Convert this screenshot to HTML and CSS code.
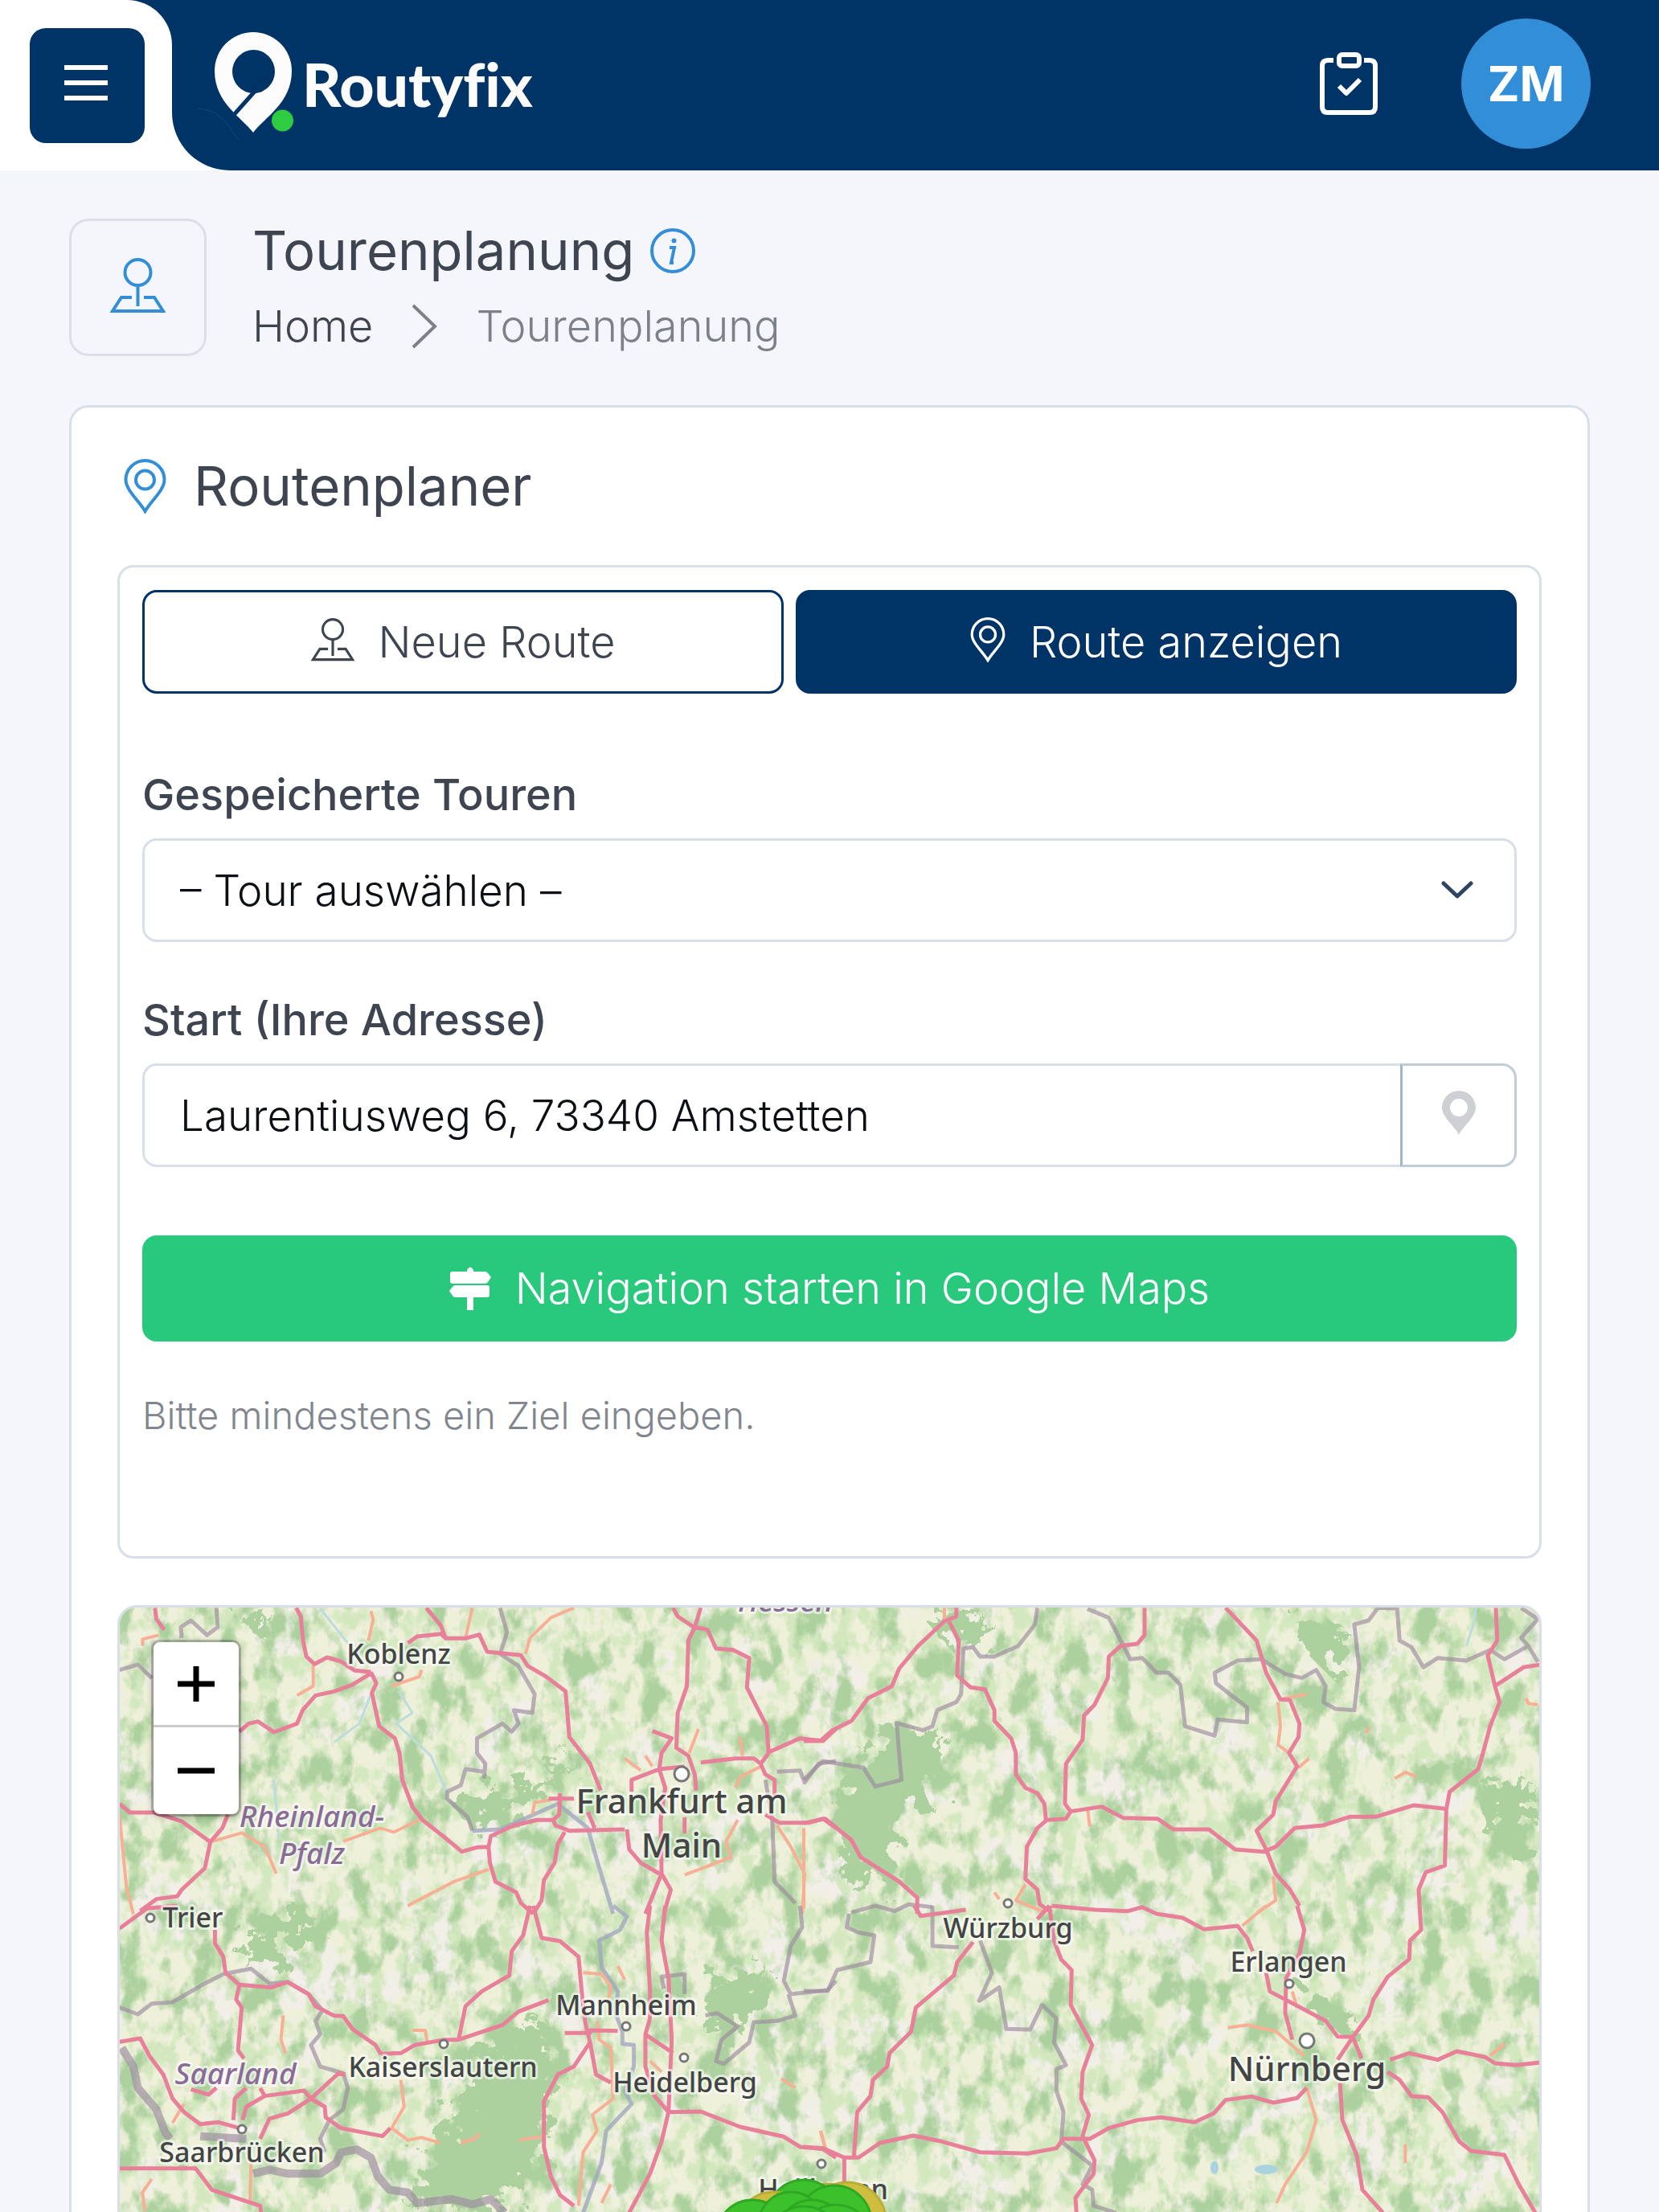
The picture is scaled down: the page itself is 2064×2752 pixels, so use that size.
FILE: index.html
```html
<!DOCTYPE html>
<html lang="de">
<head>
<meta charset="utf-8">
<meta name="viewport" content="width=device-width, initial-scale=1">
<title>Tourenplanung – Routyfix</title>
<link rel="stylesheet" href="styles.css">
</head>
<body>
<svg class="defs" width="0" height="0" aria-hidden="true">
  <symbol id="i-station" viewBox="0 0 69 69"><g fill="none" stroke="currentColor" stroke-width="4"><circle cx="34.5" cy="18" r="16"/><path d="M34.500 34V60M27 49H14L3 66H66L55 49H42"/></g></symbol>
  <symbol id="i-pin" viewBox="0 0 53 68"><g fill="none" stroke="currentColor" stroke-width="4"><path d="M26.500 65C20 53 2.500 39 2.500 26A24 24 0 0 1 50.500 26C50.500 39 33 53 26.500 65Z"/><circle cx="26.500" cy="26" r="11.500"/></g></symbol>
</svg>

<header class="topbar">
  <div class="menu-zone">
    <div class="menu-inner">
      <button class="menu-btn" type="button" aria-label="Menü">
        <svg viewBox="0 0 54 44"><path d="M0 3H54M0 22H54M0 41H54" stroke="currentColor" stroke-width="6"/></svg>
      </button>
    </div>
  </div>
  <div class="bar">
    <a class="logo" href="#">
      <svg class="logo-mark" viewBox="246 36 130 144">
        <path d="M246 139Q270 140 284 160T298 178" fill="none" stroke="#17477a" stroke-width="1"/>
        <path d="M315 169C300 149 267 132 267 92A48 48 0 0 1 363 92C363 132 330 149 315 169Z" fill="#fcfcfd"/>
        <ellipse cx="315.500" cy="93" rx="26.500" ry="27" fill="#036"/>
        <path d="M336 104L326 118L316 120L310 112Z" fill="#036"/>
        <path d="M289 149L322 112" stroke="#036" stroke-width="5"/>
        <circle cx="351.500" cy="154" r="13.500" fill="#2ecc40"/>
      </svg>
      <span class="logo-text">Routyfix</span>
    </a>
    <div class="bar-tools">
      <button class="tool-btn" type="button" aria-label="Aufgaben">
        <svg viewBox="0 0 72 78"><g fill="none" stroke="currentColor" stroke-width="6" stroke-linejoin="round"><path d="M17 10H10Q3 10 3 17V68Q3 75 10 75H62Q69 75 69 68V17Q69 10 62 10H55"/><rect x="24" y="3" width="25" height="14" rx="4"/><path d="M24 42L33 51L50 34"/></g></svg>
      </button>
      <button class="avatar" type="button">ZM</button>
    </div>
  </div>
</header>

<main class="page">
  <div class="page-head">
    <div class="page-icon"><svg><use href="#i-station"/></svg></div>
    <div class="page-titles">
      <h1>Tourenplanung
        <svg class="info" viewBox="0 0 56 56"><circle cx="28" cy="28" r="26" fill="none" stroke="currentColor" stroke-width="4"/><circle cx="29.500" cy="15.500" r="3" fill="currentColor"/><path d="M24 24H30L26 43H29" fill="none" stroke="currentColor" stroke-width="4"/></svg>
      </h1>
      <nav class="crumbs" aria-label="Breadcrumb">
        <a href="#">Home</a>
        <svg viewBox="0 0 32 56"><path d="M2 2L29 28L2 54" fill="none" stroke="currentColor" stroke-width="4"/></svg>
        <span>Tourenplanung</span>
      </nav>
    </div>
  </div>

  <section class="card">
    <h2><svg><use href="#i-pin"/></svg>Routenplaner</h2>

    <form class="panel">
      <div class="tabs">
        <button class="tab" type="button"><svg class="station"><use href="#i-station"/></svg>Neue Route</button>
        <button class="tab tab-active" type="button"><svg class="pin"><use href="#i-pin"/></svg>Route anzeigen</button>
      </div>

      <label for="tour">Gespeicherte Touren</label>
      <div class="select-wrap">
        <select id="tour"><option>– Tour auswählen –</option></select>
        <svg viewBox="0 0 40 22"><path d="M3 3L20 19L37 3" fill="none" stroke="currentColor" stroke-width="5" stroke-linecap="round" stroke-linejoin="round"/></svg>
      </div>

      <label for="start">Start (Ihre Adresse)</label>
      <div class="input-group">
        <input id="start" type="text" value="Laurentiusweg 6, 73340 Amstetten">
        <button type="button" aria-label="Standort verwenden">
          <svg viewBox="0 0 42 55"><path fill="currentColor" fill-rule="evenodd" d="M21 55C16 44 0 33 0 21A21 21 0 0 1 42 21C42 33 26 44 21 55ZM21 10A11 11 0 1 0 21 32A11 11 0 1 0 21 10Z"/></svg>
        </button>
      </div>

      <button class="go" type="button">
        <svg viewBox="0 0 52 54"><path fill="currentColor" d="M22 4Q26 -3 30 4V6H44Q47 6 48 8L52 13L48 19Q47 21 44 21H4Q1 21 1 18V9Q1 6 4 6H22ZM8 23H47Q50 23 50 26V35Q50 38 47 38H30V54H22V38H8Q5 38 4 36L0 30L4 25Q5 23 8 23Z"/></svg>
        Navigation starten in Google Maps
      </button>
      <p class="hint">Bitte mindestens ein Ziel eingeben.</p>
    </form>

    <div class="map">
      <svg class="map-canvas" viewBox="149 1999 1766 800" preserveAspectRatio="xMinYMin slice">
        <defs>
          <filter id="wood" x="0" y="0" width="1" height="1" color-interpolation-filters="sRGB">
            <feTurbulence type="fractalNoise" baseFrequency="0.034 0.022" numOctaves="5" seed="11"/>
            <feColorMatrix values="0 0 0 0 0.678  0 0 0 0 0.82  0 0 0 0 0.62  5 0 0 0 -2.450"/>
          </filter>
          <filter id="meadow" x="0" y="0" width="1" height="1" color-interpolation-filters="sRGB">
            <feTurbulence type="fractalNoise" baseFrequency="0.050 0.035" numOctaves="4" seed="5"/>
            <feColorMatrix values="0 0 0 0 0.83  0 0 0 0 0.91  0 0 0 0 0.75  0 5 0 0 -2.300"/>
          </filter>
          <filter id="town" x="0" y="0" width="1" height="1" color-interpolation-filters="sRGB">
            <feTurbulence type="fractalNoise" baseFrequency="0.012" numOctaves="4" seed="23"/>
            <feColorMatrix values="0 0 0 0 0.949  0 0 0 0 0.937  0 0 0 0 0.914  0 0 8 0 -4.200"/>
          </filter>
          <filter id="rough" x="-0.2" y="-0.2" width="1.4" height="1.4">
            <feTurbulence type="fractalNoise" baseFrequency="0.05" numOctaves="4" seed="2"/>
            <feDisplacementMap in="SourceGraphic" scale="70"/>
          </filter>
        </defs>
        <rect x="149" y="1999" width="1766" height="800" fill="#eef0d9"/>
        <rect x="149" y="1999" width="1766" height="800" filter="url(#town)"/>
        <rect x="149" y="1999" width="1766" height="800" filter="url(#meadow)"/>
        <rect x="149" y="1999" width="1766" height="800" filter="url(#wood)"/>
        <g fill="#add19e" filter="url(#rough)">
          <path d="M560 2640L600 2540L680 2510L686 2600L670 2700L600 2752L500 2740Z"/>
          <path d="M560 2240L640 2220L720 2180L650 2250L590 2280Z"/>
          <path d="M1040 2230L1110 2150L1170 2150L1170 2220L1120 2260L1110 2340L1060 2350L1050 2300Z"/>
          <path d="M310 2400L370 2370L400 2390L340 2440L300 2440Z"/>
          <path d="M1850 2220L1900 2210L1900 2300L1860 2300Z"/>
          <path d="M1150 2010L1230 2010L1220 2040L1170 2040ZM1610 2010L1670 2020L1660 2090L1620 2050ZM290 2010L340 2010L330 2040Z"/>
          <path d="M890 2460L950 2440L950 2490L900 2540L870 2520ZM1620 2470L1680 2500L1670 2530L1640 2520Z"/>
        </g>
        <g fill="#aad3df"><ellipse cx="1575" cy="2698" rx="14" ry="6"/><ellipse cx="1511" cy="2696" rx="5" ry="8"/></g>

        <!-- north-west -->
        <g transform="translate(140 1980) scale(.574 .3333)">
          <path class="stream" d="M450 60L510 190M620 370L650 450L615 490L690 610L725 750M560 380L535 490L480 560M350 700L360 920"/>
          <path class="river" d="M780 890L840 885L965 790L1030 880L1050 1000L1085 1200"/>
          <path class="border" d="M840 58L855 150L840 230L880 275L915 380L910 450L870 440L880 490L865 520L845 490L790 545L790 600L808 640L805 695M805 670L765 660L755 720L725 745L725 770L770 840L780 890M225 58L228 130L205 160L170 105L148 130L150 170M15 290L55 270L85 320M1415 700L1430 850L1435 1080L1480 1160M1440 670L1490 665L1500 710L1530 640L1568 630"/>
          <path class="minor" d="M560 70L565 100L555 180M780 58L765 170M1000 58L950 95L905 170L895 230M435 270L435 350L400 385M670 290L665 315L605 350M212 932L280 898L330 950L355 1050M665 850L610 895L580 880L500 930M815 1035L740 1080L640 1170M15 830L30 1100L45 1200M1405 650L1360 690L1350 730M1355 850L1330 930L1340 990L1240 1055M1440 870L1470 950L1500 1050L1495 1200M1110 620L1145 665M1155 610L1170 650M1270 510L1250 600M1360 540L1365 610M100 160L65 175L65 200M910 830L915 785L950 775"/>
          <path class="road" d="M92 58L95 100L112 140M398 58L408 90L413 180L420 240L438 268L465 243L495 258L525 292L560 298M275 520L295 490L315 482L350 522L400 490L412 440L440 385L480 370L520 345L558 305M560 298L572 340L562 375L578 500L612 545L622 600L628 700L650 800L672 850L720 915L757 968L790 952L815 950M680 58L712 125L722 172L765 172L795 158L812 222L885 235L900 275L940 315L982 370L990 540L1035 640L1058 740M722 172L712 155L660 165L640 190M815 950L820 910L870 870L920 850L955 850L960 870L990 890L1110 885M815 950L818 1010L830 1080L875 1120L885 1160L912 1200M980 895L965 940L958 1010L935 1075L930 1150L912 1200M1215 58L1225 90L1260 130L1290 140L1308 210L1345 215L1380 245L1375 355L1400 440L1418 500L1422 600L1405 640L1415 680L1435 700L1435 760M1275 58L1262 130L1248 180L1245 350L1225 450L1222 580L1248 610L1262 680L1265 740M1170 518L1212 545L1190 600L1185 660L1198 730L1188 850L1190 1050L1210 1110L1195 1200M1190 1050L1155 1200M1240 650L1185 660L1125 700L1125 745M1275 635L1350 620L1390 620L1405 640M1425 595L1490 545L1540 555L1568 510M1115 885L1120 960L1145 1010L1185 1050M1415 830L1445 860L1510 860L1540 845L1568 880M15 790L38 822L90 822L150 855L212 932L200 1030L150 1110L140 1135L95 1145L60 1190M250 830L238 880L212 932M970 750L968 830L955 850M945 770L1000 770M1030 820L1045 880M1240 840L1240 900"/>
        </g>
        <!-- north-east -->
        <g transform="translate(1000 1980) scale(.593 .3333)">
          <path class="stream" d="M1410 58L1405 120L1390 200"/>
          <path class="border" d="M490 58L485 120L450 200L400 240L370 240L355 205L335 210L330 380L320 410L280 440L270 500L250 515L195 488L200 600L205 700L150 725L125 655L40 630L0 700M595 62L640 95L665 180L685 250L710 245L740 300L765 300L790 345L800 500L862 535L868 475L930 485L930 430L865 340L862 300L910 255L960 250L1010 305L1045 320L1075 290L1095 350L1090 410L1115 435L1155 440L1165 280L1155 120L1185 105L1205 58L1245 60L1250 180L1275 205L1300 280L1330 245L1390 255L1440 215L1470 250L1520 200L1540 260M1505 58L1540 100L1505 170L1520 200M100 1195L150 1170L190 1190L220 1165L270 1175"/>
          <path class="minor" d="M295 58L295 105M595 800L600 875M995 410L1000 500L995 570L1018 600M1060 620L1038 655M1055 380L1000 400M985 1060L990 1150L950 1198M465 1090L445 1150L500 1190M400 1120L410 1145M0 880L0 1180M1240 695L1262 672L1285 688M1515 395L1520 415L1540 420M1185 505L1180 525"/>
          <path class="road" d="M0 555L35 555L60 515L100 480L135 395L185 350L200 285L240 200L295 108L320 90L320 58M305 110L325 180L322 310L350 355L380 362L400 440L400 480L435 545L445 600L445 680L465 730L490 750L505 790L508 850M715 58L715 160L700 192L665 200L640 240L638 320L610 420L588 460L585 550L550 640L548 790L560 818L550 845L510 850L490 880L468 950L465 1070L490 1110L495 1165L520 1195M560 818L625 800L670 842L742 845L775 885L850 885L905 960L965 968L990 950L1030 880L1090 870L1145 838L1200 838L1280 795L1345 808M885 58L950 180L970 300L1000 400L1020 402L1040 490L1038 540L1018 600L1035 650L990 780L985 830L950 890L970 960L990 1050L1020 1110L1040 1170M1452 58L1455 180L1435 235L1450 350L1460 410L1440 500L1425 600L1415 660L1355 745L1348 810L1345 1020L1305 1045L1290 1110L1292 1170M1450 350L1510 280L1545 270M0 862L45 845L100 925L120 990L200 1080L238 1140L238 1200"/>
        </g>
        <!-- south-west -->
        <g transform="translate(140 2370) scale(.574 .3333)">
          <path class="river" d="M1085 0L1115 40L1100 90L1055 130L1060 230L1095 320L1090 400L1105 470L1105 515L1130 520L1130 600L1110 690L1125 740L1070 840L1060 960L1020 1146"/>
          <path class="border" d="M15 380L55 405L85 365L130 360L200 290L240 255L300 235L340 290L380 285L425 330L455 390L440 430L450 480L430 520L450 600L500 625L510 680L500 760L470 800L450 870L460 920M1490 0L1495 80L1470 150L1455 280L1470 330L1550 315L1568 280M1465 330L1480 410L1440 430L1390 435L1380 510L1325 590L1308 580L1320 500L1355 450L1310 400L1285 410M1240 330L1240 255L1190 265L1195 310"/>
          <path class="border nation" d="M20 530L45 600L55 680L95 760L115 850L125 870M190 860L290 870M305 1000L340 985L380 1000L450 1000L485 960L495 920L530 910L560 940L575 1010L600 1060L640 1070L660 1110L735 1095L780 1115L820 1095L850 1146"/>
          <path class="minor" d="M370 410L365 500L375 550M650 465L678 465L682 510M625 650L632 750L605 830L640 875L670 865L710 885M755 885L785 870L795 850M880 875L930 862M1020 250L1060 255L1080 300L1075 350M1095 225L1110 275M1050 430L1055 500L1080 530L1085 720L1040 780L1050 840L1020 920L1010 1120M1080 1040L1060 1110M300 960L298 1110M85 1020L65 1070L70 1140M1535 840L1545 905M1450 645L1480 680M155 740L130 810M1165 580L1190 620"/>
          <path class="road" d="M15 85L75 10L140 0M222 90L222 140L240 190L245 250L275 295L345 305L380 285L425 330L440 375L480 410L500 412L520 460L570 520L582 555M275 295L268 350L280 380L272 540L285 570M582 553L625 550L655 520L720 500L750 500L845 445L880 395L945 352M750 500L765 375L800 320L860 260L865 170L890 110L905 0M912 0L930 120L970 132L1010 190L1018 340L1025 440L1035 510L1000 600L965 630L935 730L935 900L950 1010L970 1080L1000 1120M1035 510L1048 630L1080 660M980 475L1035 475L1035 465L1095 467M1165 0L1158 100L1165 320V420M1198 0L1190 130L1205 270L1212 500L1205 770M1165 420L1155 480L1155 600L1175 710L1205 770L1190 880L1165 1000L1120 1146M1155 480L1215 550M1205 770L1275 768L1360 825L1455 862L1490 900L1540 908L1568 940M15 508L60 495L80 560L110 630L130 720L155 770L190 815L230 808L275 830M170 685L208 705L225 680M262 800L265 720L290 680M320 680L330 710M282 800L290 750L330 710L415 690L430 720L490 625L505 630M430 720L380 775L340 795L320 870M430 720L460 750L462 790L495 830L585 860L602 830M15 980L180 980L215 1060L320 1120L322 1146"/>
        </g>
        <!-- south-east -->
        <g transform="translate(1000 2370) scale(.593 .3333)">
          <path class="border" d="M0 318L50 318L70 240L140 210L148 110L115 100L90 80L95 30M270 0L270 150L325 155M370 130L395 250L368 355L410 305L425 460L475 462L500 370L530 420L525 510L550 595L530 610L530 690L545 770L540 880L605 970L585 1040L605 1060L608 1120L655 1146"/>
          <path class="minor" d="M970 0L920 75M890 455L930 445L990 468L1050 560M1025 320L1035 380M1055 680L1075 800L1055 920L1010 1040L992 1110M1470 515L1440 560M1262 890L1262 960M35 840L45 905"/>
          <path class="road" d="M232 0L245 38L340 15M520 0L610 15L680 20L710 5L740 30L795 45L840 88L910 75L930 120L942 170M515 0L490 50M515 0L525 130M1035 0L1050 90L1040 180L1012 270L1010 400L1025 500M1292 0L1295 90L1272 130L1270 200L1225 265L1195 350L1185 410L1152 490L1120 575M970 250L978 320L1010 350L1095 430L1120 488L1152 490L1170 570M1230 575L1270 550L1330 575L1370 543L1430 565L1450 588L1495 595L1545 585M1225 620L1250 650L1275 710L1310 715L1340 770L1375 880L1400 915L1470 930L1500 1040L1535 1146M1125 660L1130 800L1160 930L1172 1060L1215 1146M1055 680L1035 718L985 735L940 712L885 725L860 775L820 808L750 790L700 800L640 830L600 870L545 870L530 905L470 925L370 920L290 880L230 858L160 885L115 940L85 940L40 905L0 900M85 940L85 1030M105 940L112 770L140 710L145 650L175 600L180 550L225 470L235 380L315 260L322 210L355 135M525 130L540 200L562 240L560 370L605 520L585 620L582 720L598 780L585 860L610 950L608 1000L570 1090L572 1146"/>
        </g>

        <g class="dots">
          <circle cx="496" cy="2085" r="5"/><circle cx="187" cy="2385" r="5"/><circle cx="779" cy="2520" r="5"/><circle cx="552" cy="2542" r="5"/><circle cx="851" cy="2559" r="5"/><circle cx="301" cy="2648" r="5"/><circle cx="1254" cy="2367" r="5"/><circle cx="1604" cy="2467" r="5"/><circle cx="1022" cy="2691" r="5"/><circle cx="848" cy="2206" r="9"/><circle cx="1626" cy="2538" r="9"/>
        </g>
        <g class="places">
          <text x="496" y="2069">Koblenz</text>
          <text x="240" y="2397">Trier</text>
          <text x="779" y="2506">Mannheim</text>
          <text x="551" y="2583">Kaiserslautern</text>
          <text x="852" y="2602">Heidelberg</text>
          <text x="301" y="2689">Saarbrücken</text>
          <text x="1254" y="2410">Würzburg</text>
          <text x="1603" y="2452">Erlangen</text>
          <text x="1024" y="2735">Heilbronn</text>
        </g>
        <g class="places cities">
          <text x="848" y="2255">Frankfurt am</text>
          <text x="848" y="2310">Main</text>
          <text x="1626" y="2588">Nürnberg</text>
        </g>
        <g class="places states">
          <text x="388" y="2272">Rheinland-</text>
          <text x="388" y="2318">Pfalz</text>
          <text x="293" y="2592">Saarland</text>
          <text x="977" y="2004">Hessen</text>
        </g>
        <g class="stops">
          <circle class="alt" cx="1054" cy="2762" r="48"/><circle class="alt" cx="1030" cy="2760" r="44"/>
          <circle cx="1000" cy="2756" r="45"/><circle class="alt" cx="962" cy="2770" r="44"/><circle cx="936" cy="2780" r="44"/><circle cx="1038" cy="2764" r="46"/><circle cx="984" cy="2766" r="40"/><circle cx="1010" cy="2778" r="42"/><circle cx="1040" cy="2788" r="46"/><circle cx="1000" cy="2790" r="46"/>
        </g>
      </svg>
      <div class="zoom">
        <button type="button" aria-label="Vergrößern"><svg viewBox="0 0 46 46"><path d="M0 23H46M23 1V45" stroke="currentColor" stroke-width="7"/></svg></button>
        <button type="button" aria-label="Verkleinern"><svg viewBox="0 0 46 46"><path d="M0 23H46" stroke="currentColor" stroke-width="7"/></svg></button>
      </div>
    </div>
  </section>
</main>
</body>
</html>
```
FILE: styles.css
```css
:root {
  --navy: #003366;
  --blue: #338ed8;
  --ink: #3f4550;
  --muted: #7c8189;
  --line: #d8dfe9;
  --font: Inter, "Open Sans", sans-serif;
}

* { box-sizing: border-box; }

body {
  margin: 0;
  height: 100vh;
  overflow: hidden;
  background: #f4f6fb;
  color: var(--ink);
  font: 300 54px/64px var(--font);
}

button, input, select { font: inherit; color: inherit; margin: 0; }
button { cursor: pointer; border: 0; padding: 0; background: none; }
svg { display: block; flex: none; }
.defs { position: absolute; }

/* top bar */
.topbar { display: flex; height: 212px; background: #fff; }
.menu-zone { flex: none; width: 214px; background: var(--navy); }
.menu-inner {
  height: 100%;
  padding: 35px 37px;
  background: #fff;
  border-top-right-radius: 56px;
}
.menu-btn {
  display: grid;
  place-items: center;
  width: 143px;
  height: 143px;
  padding: 0 4px 8px 0;
  border-radius: 20px;
  background: var(--navy);
  color: #fff;
}
.menu-btn svg { width: 54px; height: 44px; }
.bar {
  flex: 1;
  display: flex;
  align-items: center;
  justify-content: space-between;
  padding: 0 85px 4px 32px;
  background: var(--navy);
  border-bottom-left-radius: 72px;
  color: #fff;
}
.logo { display: flex; align-items: center; color: #fcfcfd; text-decoration: none; }
.logo-mark { width: 130px; height: 144px; }
.logo-text { font: 900 75px/96px Lato, sans-serif; font-variant-ligatures: none; }
.bar-tools { display: flex; align-items: center; gap: 104px; }
.tool-btn { color: #fff; }
.tool-btn svg { width: 72px; height: 78px; }
.avatar {
  width: 161px;
  height: 162px;
  border-radius: 50%;
  background: var(--blue);
  color: #fff;
  font-size: 60px;
  font-weight: 700;
}

/* page heading */
.page { padding: 60px 86px 0; }
.page-head { display: flex; gap: 57px; height: 171px; }
.page-icon {
  display: grid;
  place-items: center;
  width: 171px;
  height: 171px;
  padding-bottom: 4px;
  border: 3px solid #dcdfea;
  border-radius: 24px;
  color: var(--blue);
}
.page-icon svg { width: 69px; height: 69px; }
h1, h2 { margin: 0; font-weight: 400; font-size: 67px; line-height: 80px; }
h1 { display: flex; align-items: center; gap: 20px; }
.info { width: 56px; height: 56px; color: var(--blue); }
.crumbs { display: flex; align-items: center; gap: 48px; height: 108px; color: var(--muted); }
.crumbs a { color: var(--ink); text-decoration: none; }
.crumbs svg { width: 32px; height: 56px; }

/* card */
.card {
  margin-top: 61px;
  padding: 0 57px 57px;
  background: #fff;
  border: 3px solid var(--line);
  border-radius: 24px;
}
h2 { display: flex; align-items: center; gap: 34px; height: 196px; padding-left: 8px; }
h2 svg { width: 53px; height: 68px; color: var(--blue); }
.panel {
  padding: 28px 28px 143px;
  border: 3px solid var(--line);
  border-radius: 20px;
}
.tabs { display: flex; gap: 15px; margin-bottom: 94px; }
.tab, .go {
  display: flex;
  align-items: center;
  justify-content: center;
  gap: 30px;
  border-radius: 18px;
}
.tab { flex: 8 1 0; height: 129px; border: 3px solid var(--navy); }
.tab-active { flex-grow: 9; background: var(--navy); color: #fff; }
.tab svg { margin-bottom: 6px; }
.tab .station { width: 54px; height: 56px; }
.tab .pin { width: 44px; height: 56px; }
label { display: block; margin-bottom: 22px; font-weight: 500; }
.select-wrap { position: relative; margin-bottom: 65px; }
.select-wrap svg {
  position: absolute;
  top: 53px;
  right: 54px;
  width: 40px;
  height: 22px;
  color: #2c4560;
  pointer-events: none;
}
select, input {
  display: block;
  width: 100%;
  height: 129px;
  padding: 0 44px;
  border: 3px solid var(--line);
  border-radius: 18px;
  background: #fff;
  color: #0c0f14;
  font-size: 53px;
  appearance: none;
}
.input-group { display: flex; margin-bottom: 85px; }
.input-group input { flex: 1; width: auto; min-width: 0; border-right: 0; border-radius: 18px 0 0 18px; }
.input-group button {
  display: grid;
  place-items: center;
  width: 145px;
  height: 129px;
  padding-bottom: 6px;
  border: 3px solid #c0ccda;
  border-left-color: #a3b6c8;
  border-radius: 0 18px 18px 0;
  color: #cfd0d4;
}
.input-group svg { width: 42px; height: 55px; }
.go { width: 100%; height: 132px; background: #28c97c; color: #fff; }
.go svg { width: 52px; height: 54px; }
.hint { margin: 60px 0 0; font-size: 47px; color: #81868e; }

/* map */
.map {
  position: relative;
  height: 1200px;
  margin-top: 58px;
  overflow: hidden;
  border: 3px solid var(--line);
  border-radius: 24px;
  background: #eef0d9;
}
.map-canvas { width: 100%; }
.map-canvas path { stroke-linejoin: round; vector-effect: non-scaling-stroke; }
.road { fill: none; stroke: #e8809a; stroke-width: 5px; }
.minor { fill: none; stroke: #f7b096; stroke-width: 4px; }
.border { fill: none; stroke: #9d8ba0; stroke-width: 5px; opacity: .65; }
.nation { stroke-width: 10px; }
.river { fill: none; stroke: #a3a9c0; stroke-width: 5px; opacity: .8; }
.stream { fill: none; stroke: #bcdcdf; stroke-width: 3px; }
.dots { fill: #fff; stroke: #777; stroke-width: 3px; }
.places {
  font: 500 34px "Noto Sans", sans-serif;
  text-anchor: middle;
  fill: #444;
  stroke: rgba(255, 255, 255, .6);
  stroke-width: 6px;
  stroke-linejoin: round;
  paint-order: stroke;
}
.cities { font-size: 42px; }
.states { font-size: 37px; font-style: italic; fill: #8a6b98; }
.stops { fill: #3cc02c; stroke: #2fa823; stroke-width: 3px; }
.stops .alt { fill: #cfbd3f; stroke: #b9ac38; }
.zoom {
  position: absolute;
  top: 43px;
  left: 42px;
  width: 106px;
  border-radius: 8px;
  background: #fff;
  box-shadow: 0 0 0 3px rgba(0, 0, 0, .2), 0 2px 10px rgba(0, 0, 0, .4);
}
.zoom button { display: grid; place-items: center; width: 106px; height: 103px; color: #000; }
.zoom button + button { height: 111px; border-top: 3px solid #ccc; }
.zoom svg { width: 46px; height: 46px; }
```
